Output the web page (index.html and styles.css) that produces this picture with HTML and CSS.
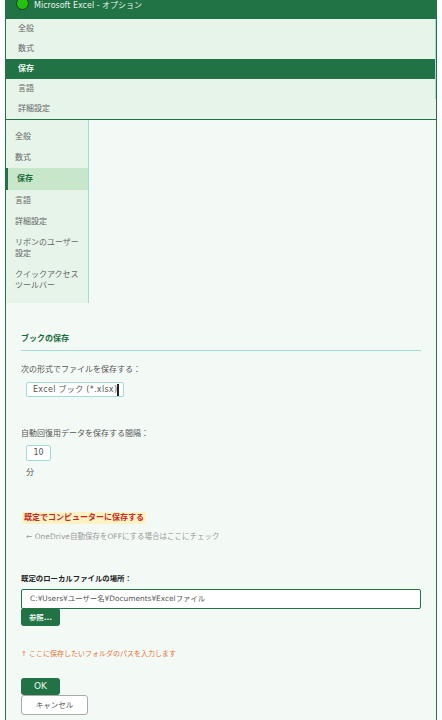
FILE: index.html
```html
<!DOCTYPE html>
<html lang="ja">
<head>
<meta charset="utf-8">
<title>Microsoft Excel - オプション</title>
<link rel="stylesheet" href="styles.css">
</head>
<body>
<div class="window">
  <header class="titlebar"><span class="dot"></span><span class="title">Microsoft Excel - オプション</span></header>
  <nav class="topnav">
    <a class="topitem">全般</a>
    <a class="topitem">数式</a>
    <a class="topitem on">保存</a>
    <a class="topitem">言語</a>
    <a class="topitem">詳細設定</a>
  </nav>
  <aside class="side">
    <a class="sideitem">全般</a>
    <a class="sideitem">数式</a>
    <a class="sideitem on">保存</a>
    <a class="sideitem">言語</a>
    <a class="sideitem">詳細設定</a>
    <a class="sideitem">リボンのユーザー設定</a>
    <a class="sideitem">クイックアクセス ツールバー</a>
  </aside>
  <main class="content">
    <h2 class="heading">ブックの保存</h2>
    <p class="label first">次の形式でファイルを保存する：</p>
    <div class="select">Excel ブック (*.xlsx)<span class="caret"></span></div>
    <p class="label second">自動回復用データを保存する間隔：</p>
    <div class="num">10</div>
    <p class="unit">分</p>
    <p class="warn"><span class="mark">既定でコンピューターに保存する</span></p>
    <p class="hint">← OneDrive自動保存をOFFにする場合はここにチェック</p>
    <p class="label third">既定のローカルファイルの場所：</p>
    <div class="path">C:¥Users¥ユーザー名¥Documents¥Excelファイル</div>
    <button class="btn browse">参照...</button>
    <p class="note">↑ ここに保存したいフォルダのパスを入力します</p>
    <button class="btn ok">OK</button>
    <button class="cancel">キャンセル</button>
  </main>
</div>
</body>
</html>
```
FILE: styles.css
```css
* { box-sizing: border-box; }
html, body { margin: 0; padding: 0; height: 720px; overflow: hidden; background: #fff; }
body { padding: 0 5px; font-family: "DejaVu Sans", "Noto Sans CJK JP", sans-serif; font-size: 8px; line-height: 11px; color: #555; }
p, h2 { margin: 0; }
.window { width: 432px; height: 720px; background: #f3faf6; border-left: 1px solid #217346; border-right: 1px solid #217346; overflow: hidden; }
.titlebar { height: 19px; margin-left: -1px; margin-right: -1px; background: #217346; color: #e8f5ec; display: flex; align-items: flex-start; padding-left: 11px; }
.dot { width: 13px; height: 13px; margin-top: -3px; border-radius: 50%; background: #28c010; border: 1px solid #0c4a14; }
.title { margin-left: 5px; margin-top: 0; line-height: 11px; }
.topnav { height: 101px; background: #e6f4ea; border-bottom: 1px solid #217346; display: flex; flex-direction: column; }
.topitem { height: 20px; line-height: 20px; padding-left: 12px; color: #666; }
.topitem:not(:last-child) { border-right: 1px solid #a0dcd8; }
.topitem.on { background: #217346; color: #f0f8f2; font-weight: bold; }
.side { width: 83px; height: 183px; background: #e6f4ea; border-right: 1px solid #a0dcd8; display: flex; flex-direction: column; padding-top: 6px; }
.sideitem { padding: 5px 8px 5px 9px; line-height: 11px; color: #666; }
.sideitem.on { background: #c8e6c9; border-left: 2px solid #217346; color: #1a6b3c; padding: 5px 8px 6px 9px; font-weight: bold; }
.content { padding: 30px 15px 0; display: flex; flex-direction: column; align-items: flex-start; }
.heading { width: 400px; height: 18px; font-size: 8px; line-height: 11px; color: #1a6b3c; border-bottom: 1px solid #a0dcd8; font-weight: bold; }
.label.first { margin-top: 13px; }
.select { margin: 7px 0 0 5px; width: 98px; height: 15px; background: #fff; border: 1px solid #a0dcd8; border-radius: 2px; padding-left: 6px; line-height: 13px; color: #555; white-space: nowrap; letter-spacing: 0.3px; display: flex; align-items: flex-start; }
.caret { flex: none; width: 2px; height: 12px; margin: 1px 0 0 0; background: #222; }
.label.second { margin-top: 31px; }
.num { margin: 6px 0 0 5px; width: 25px; height: 16px; background: #fff; border: 1px solid #a0dcd8; border-radius: 2px; text-align: center; line-height: 13px; color: #555; }
.unit { margin: 6px 0 0 5px; }
.warn { margin-top: 34px; }
.mark { background: #fff3c4; color: #c62828; font-weight: bold; padding: 0 2px; display: inline-block; height: 12px; margin-left: 1px; }
.hint { margin: 7px 0 0 5px; color: #999; white-space: nowrap; font-size: 7.5px; }
.label.third { margin-top: 31px; color: #222; font-weight: bold; font-size: 7.4px; }
.path { margin-top: 5px; width: 400px; height: 20px; background: #fff; border: 1px solid #217346; border-radius: 2px; padding-left: 8px; line-height: 18px; color: #555; font-size: 7.4px; }
.btn { display: block; border: 0; border-radius: 3px; background: #217346; color: #eef7f0; font: inherit; width: 39px; height: 17px; padding: 0; }
.browse { margin-top: -1px; height: 18px; font-size: 7.4px; font-weight: bold; }
.note { margin-top: 23px; color: #e8703a; font-size: 7px; }
.ok { margin-top: 18px; font-size: 9px; }
.cancel { display: block; width: 67px; height: 20px; padding: 0; font: inherit; font-size: 7.5px; color: #555; background: #fff; border: 1px solid #aaa; border-radius: 3px; }
```
